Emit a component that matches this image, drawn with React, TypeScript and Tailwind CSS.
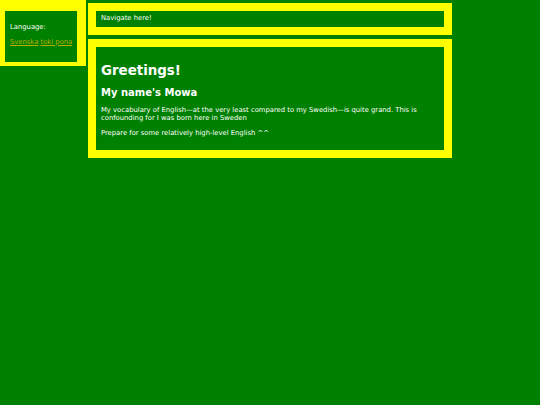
export default function App() {
  return (
    <div className="min-h-screen bg-[#008000] font-['DejaVu_Sans',Verdana,sans-serif] text-[6.8px] leading-[7.9px] text-white">
      <div className="flex items-start gap-[2px]">
        {/* language picker */}
        <aside className="box-border h-[66px] w-[86px] shrink-0 border-t-[11px] border-r-[9px] border-b-[4px] border-l-[5px] border-[#ffff00] bg-[#008000] px-[5px] pt-[6px]">
          <p className="my-[6.8px]">Language:</p>
          <p className="my-[6.8px] whitespace-nowrap">
            <a href="#" className="text-[#b8ac00] underline">
              Svenska
            </a>{" "}
            <a href="#" className="text-[#b8ac00] underline">
              toki pona
            </a>
          </p>
        </aside>

        <div className="mt-[3px] flex w-[364px] flex-col gap-[4px]">
          {/* nav */}
          <nav className="border-[8px] border-[#ffff00] bg-[#008000] px-[5px] py-[4px]">
            <p>Navigate here!</p>
          </nav>

          {/* main content */}
          <main className="border-[8px] border-[#ffff00] bg-[#008000] px-[5px] pt-[7px] pb-[5px]">
            <h1 className="my-[8.93px] text-[13.4px] leading-[15.6px] font-bold">Greetings!</h1>
            <h2 className="my-[8.3px] text-[10px] leading-[11.64px] font-bold">My name's Mowa</h2>
            <p className="my-[6.8px]">
              My vocabulary of English—at the very least compared to my Swedish—is quite grand. This is
              confounding for I was born here in Sweden
            </p>
            <p className="my-[6.8px]">Prepare for some relatively high-level English ^^</p>
          </main>
        </div>
      </div>
    </div>
  );
}
